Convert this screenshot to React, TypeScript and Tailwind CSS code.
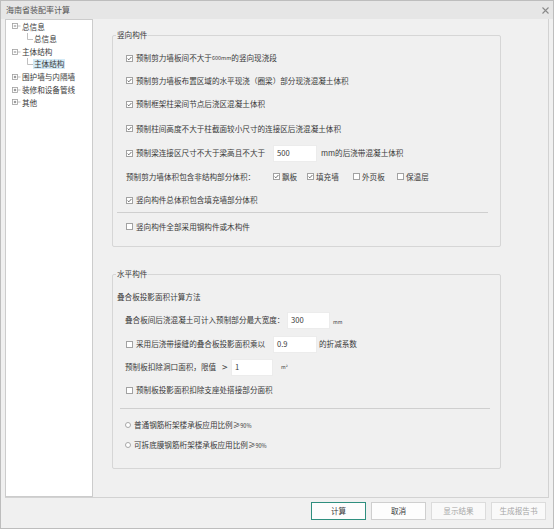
import React from 'react';

const Check = ({ on }: { on: boolean }) => (
  <span className="w-[7px] h-[7px] shrink-0 border border-[#a2a2a2] bg-white flex items-center justify-center">
    {on && (
      <svg width="5" height="5" viewBox="0 0 5 5">
        <path d="M0.6 2.6 L1.9 3.8 L4.4 1" fill="none" stroke="#4a4a4a" strokeWidth="0.8" />
      </svg>
    )}
  </span>
);

const Radio = () => (
  <span className="w-[6px] h-[6px] shrink-0 rounded-full border border-[#a8a8a8] bg-white" />
);

const Field = ({ value, w }: { value: string; w: string }) => (
  <div className={`${w} h-[17px] shrink-0 bg-white border border-[#ececec] pl-[3px] pt-[1px] leading-[12px] text-[7.6px] text-[#3a3a3a]`}>
    {value}
  </div>
);

const TreeRoot = ({ label, open }: { label: string; open: boolean }) => (
  <div className="h-[12.7px] flex items-center">
    <svg width="15" height="12" viewBox="0 0 15 12" className="shrink-0">
      <rect x="5.5" y="3.5" width="5" height="5" fill="#fff" stroke="#a0a0a0" strokeWidth="0.8" />
      <path d="M6.8 6 H9.2" stroke="#666" strokeWidth="0.8" />
      {!open && <path d="M8 4.8 V7.2" stroke="#666" strokeWidth="0.8" />}
      <path d="M10.5 6 H13.5" stroke="#b0b0b0" strokeWidth="0.8" />
    </svg>
    <span>{label}</span>
  </div>
);

const TreeChild = ({ label, selected }: { label: string; selected?: boolean }) => (
  <div className="h-[12.7px] flex items-center">
    <svg width="26" height="13" viewBox="0 0 26 13" className="shrink-0">
      <path d="M20.5 0 V6.5 H26" fill="none" stroke="#b0b0b0" strokeWidth="0.8" />
    </svg>
    <span className={selected ? 'bg-[#d3eaf6] px-[1px] leading-[10px]' : 'px-[1px]'}>{label}</span>
  </div>
);

const Group = ({ title, h, children }: { title: string; h: string; children: React.ReactNode }) => (
  <div className={`relative w-[389px] ${h} border border-[#d6d6d6] rounded-[2px]`}>
    <span className="absolute left-[3px] top-[-7px] bg-[#f0f0f0] px-[1px] leading-[12px]">{title}</span>
    {children}
  </div>
);

const CheckRow = ({ h, on, children }: { h: string; on: boolean; children: React.ReactNode }) => (
  <div className={`${h} flex items-center pl-[13px]`}>
    <Check on={on} />
    <span className="ml-[3px] flex items-center">{children}</span>
  </div>
);

export default function App() {
  return (
    <div className="w-[554px] h-[529px] bg-[#f0f0f0] border border-[#bdbdbd] flex flex-col font-['Noto_Sans_CJK_SC','Microsoft_YaHei',sans-serif] text-[7.6px] text-[#3a3a3a] overflow-hidden">
      <div className="h-[18px] shrink-0 bg-[#e6e6e6] flex items-center justify-between pl-[5px] pr-[4px]">
        <span className="text-[8px] text-[#555]">海南省装配率计算</span>
        <svg width="7" height="7" viewBox="0 0 7 7">
          <path d="M0.5 0.5 L6.5 6.5 M6.5 0.5 L0.5 6.5" stroke="#8a8a8a" strokeWidth="1.1" />
        </svg>
      </div>

      <div className="ml-[4px] w-[544px] h-[479px] shrink-0 flex border-r border-b border-[#d2d2d2]">
        <div className="w-[88px] h-full shrink-0 bg-white border border-[#cccccc] pl-[1px]">
          <TreeRoot label="总信息" open />
          <TreeChild label="总信息" />
          <TreeRoot label="主体结构" open />
          <TreeChild label="主体结构" selected />
          <TreeRoot label="围护墙与内隔墙" open={false} />
          <TreeRoot label="装修和设备管线" open={false} />
          <TreeRoot label="其他" open={false} />
        </div>

        <div className="flex-1 pl-[19px] pt-[16px]">
          <Group title="竖向构件" h="h-[212px]">
            <div className="pt-[11px]">
              <CheckRow h="h-[22px]" on>
                预制剪力墙板间不大于<span className="text-[5.5px]">600mm</span>的竖向现浇段
              </CheckRow>
              <CheckRow h="h-[23px]" on>
                预制剪力墙板布置区域的水平现浇（圈梁）部分现浇混凝土体积
              </CheckRow>
              <CheckRow h="h-[24px]" on>
                预制框架柱梁间节点后浇区混凝土体积
              </CheckRow>
              <CheckRow h="h-[25px]" on>
                预制柱间高度不大于柱截面较小尺寸的连接区后浇混凝土体积
              </CheckRow>
              <div className="h-[24px] flex items-center pl-[13px]">
                <Check on />
                <span className="ml-[3px] w-[137px] shrink-0">预制梁连接区尺寸不大于梁高且不大于</span>
                <Field value="500" w="w-[44px]" />
                <span className="ml-[4px]">mm的后浇带混凝土体积</span>
              </div>
              <div className="h-[23px] flex items-center pl-[13px]">
                <span className="w-[147px] shrink-0">预制剪力墙体积包含非结构部分体积：</span>
                <span className="w-[34px] flex items-center gap-[2px]"><Check on />飘板</span>
                <span className="w-[46px] flex items-center gap-[2px]"><Check on />填充墙</span>
                <span className="w-[44px] flex items-center gap-[2px]"><Check on={false} />外页板</span>
                <span className="flex items-center gap-[2px]"><Check on={false} />保温层</span>
              </div>
              <CheckRow h="h-[24px]" on>
                竖向构件总体积包含填充墙部分体积
              </CheckRow>
              <div className="ml-[4px] w-[371px] border-t border-[#cfcfcf]" />
              <CheckRow h="h-[27px]" on={false}>
                竖向构件全部采用钢构件或木构件
              </CheckRow>
            </div>
          </Group>

          <div className="h-[27px]" />

          <Group title="水平构件" h="h-[195px]">
            <div className="pt-[11px]">
              <div className="h-[22px] flex items-center pl-[4px]">叠合板投影面积计算方法</div>
              <div className="h-[24px] flex items-center pl-[12px]">
                <span className="w-[162px] shrink-0">叠合板间后浇混凝土可计入预制部分最大宽度：</span>
                <Field value="300" w="w-[43px]" />
                <span className="ml-[3px] text-[5px] pt-[3px]">mm</span>
              </div>
              <div className="h-[24px] flex items-center pl-[13px]">
                <Check on={false} />
                <span className="ml-[3px] w-[137px] shrink-0">采用后浇带接缝的叠合板投影面积乘以</span>
                <Field value="0.9" w="w-[44px]" />
                <span className="ml-[2px]">的折减系数</span>
              </div>
              <div className="h-[22px] flex items-center pl-[12px]">
                <span className="w-[97px] shrink-0">预制板扣除洞口面积，限值</span>
                <span className="w-[9px] shrink-0 text-[10px] leading-[10px]">&gt;</span>
                <Field value="1" w="w-[42px]" />
                <span className="ml-[8px] text-[5px]">m²</span>
              </div>
              <CheckRow h="h-[24px]" on={false}>
                预制板投影面积扣除支座处搭接部分面积
              </CheckRow>
              <div className="mt-[6px] ml-[7px] w-[370px] border-t border-[#cfcfcf]" />
              <div className="mt-[6px] h-[20px] flex items-center pl-[12px] gap-[3px]">
                <Radio />
                <span>普通钢筋桁架楼承板应用比例≥<span className="text-[5.5px]">90%</span></span>
              </div>
              <div className="h-[20px] flex items-center pl-[12px] gap-[3px]">
                <Radio />
                <span>可拆底膜钢筋桁架楼承板应用比例≥<span className="text-[5.5px]">90%</span></span>
              </div>
            </div>
          </Group>
        </div>
      </div>

      <div className="flex justify-end gap-[5px] pt-[4px] pr-[7px]">
        <button className="w-[55px] h-[18px] border border-[#2f8f7f] bg-[#fdfdfd] text-[7.6px] text-[#3a3a3a]">计算</button>
        <button className="w-[55px] h-[18px] border border-[#cfcfcf] bg-[#fdfdfd] text-[7.6px] text-[#3a3a3a]">取消</button>
        <button className="w-[55px] h-[18px] border border-[#dcdcdc] bg-[#f9f9f9] text-[7.6px] text-[#a6a6a6]">显示结果</button>
        <button className="w-[55px] h-[18px] border border-[#dcdcdc] bg-[#f9f9f9] text-[7.6px] text-[#a6a6a6]">生成报告书</button>
      </div>
    </div>
  );
}
